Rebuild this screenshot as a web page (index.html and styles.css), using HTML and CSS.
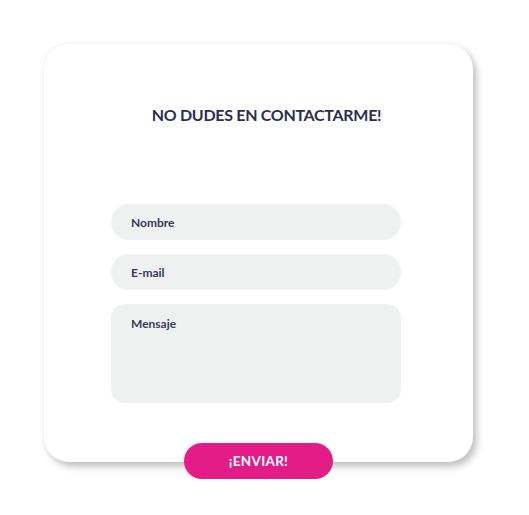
FILE: index.html
```html
<!DOCTYPE html>
<html lang="es">
<head>
    <meta charset="UTF-8">
    <meta name="viewport" content="width=device-width, initial-scale=1.0">
    <title>Contacto</title>
    <link rel="stylesheet" href="styles.css">
</head>
<body>
    <div class="card">
        <h2 class="title">NO DUDES EN CONTACTARME!</h2>
        <form class="contact-form">
            <div class="fields">
                <input type="text" class="field" placeholder="Nombre">
                <input type="email" class="field" placeholder="E-mail">
                <textarea class="field message" placeholder="Mensaje"></textarea>
            </div>
            <button type="button" class="send">¡ENVIAR!</button>
        </form>
    </div>
</body>
</html>
```

FILE: styles.css
```css
body {
    margin: 0;
    padding: 44px 0 53px 44px;
    background-color: #ffffff;
    font-family: 'Lato', 'Noto Sans', sans-serif;
}
.card {
    width: 429px;
    box-sizing: border-box;
    padding-top: 60px;
    background-color: #ffffff;
    border-radius: 25px;
    box-shadow: 4px 5px 7px rgba(0, 0, 0, 0.22), 0 0 6px rgba(0, 0, 0, 0.06);
}
.title {
    margin: 0;
    padding-left: 16px;
    text-align: center;
    font-size: 16px;
    line-height: 22px;
    font-weight: 700;
    color: #2e2f50;
    letter-spacing: -0.3px;
}
.contact-form {
    display: flex;
    flex-direction: column;
    align-items: center;
    margin-top: 78px;
}
.fields {
    display: flex;
    flex-direction: column;
    gap: 14px;
    margin-left: -5px;
}
.field {
    width: 290px;
    height: 36px;
    box-sizing: border-box;
    padding: 0 20px;
    border: none;
    border-radius: 18px;
    background-color: #eff0f0;
    font-family: 'Lato', 'Noto Sans', sans-serif;
    font-size: 12px;
    font-weight: 700;
    color: #3a3a5c;
    outline: none;
}
.field::placeholder {
    color: #3a3a5c;
}
.message {
    height: 99px;
    padding: 12px 20px;
    border-radius: 14px;
    resize: none;
}
.send {
    width: 149px;
    height: 36px;
    margin: 40px 0 -17px;
    border: none;
    border-radius: 18px;
    background-color: #e31c87;
    color: #ffffff;
    font-family: 'Lato', 'Noto Sans', sans-serif;
    font-size: 13.5px;
    font-weight: 700;
    letter-spacing: 0.3px;
    cursor: pointer;
}
```
